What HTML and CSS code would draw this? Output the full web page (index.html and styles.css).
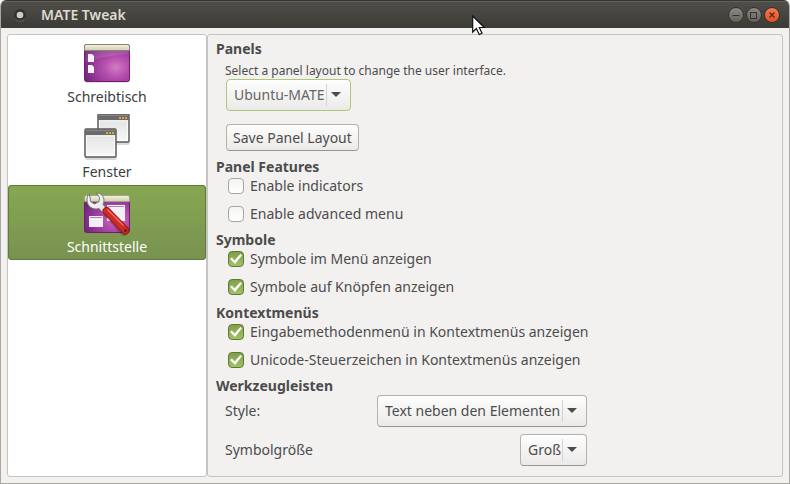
FILE: index.html
```html
<!DOCTYPE html>
<html lang="de">
<head>
<meta charset="utf-8">
<title>MATE Tweak</title>
<link rel="stylesheet" href="styles.css">
</head>
<body>
<div class="window">
  <header class="titlebar">
    <svg class="app-dot" width="14" height="14" viewBox="0 0 14 14"><circle cx="7" cy="7" r="6" fill="#343330"/><path d="M2 10.500a6 6 0 0 0 10 0" fill="none" stroke="#66645e"/><circle cx="7" cy="7" r="3.300" fill="#cfccc5"/></svg>
    <h1 class="title">MATE Tweak</h1>
    <div class="window-buttons">
      <button class="window-button" type="button" aria-label="Minimieren"><svg width="14" height="14" viewBox="0 0 14 14"><path d="M3.500 7.500h7" stroke="#33322f"/></svg></button>
      <button class="window-button" type="button" aria-label="Maximieren"><svg width="14" height="14" viewBox="0 0 14 14"><rect x="3.500" y="4.500" width="6" height="6" fill="none" stroke="#33322f"/></svg></button>
      <button class="window-button close" type="button" aria-label="Schließen"><svg width="14" height="14" viewBox="0 0 14 14"><path d="M4.500 4.500l5 5m0-5l-5 5" stroke="#5b2412" stroke-width="1.300"/></svg></button>
    </div>
  </header>
  <main class="content">
    <nav class="sidebar">
      <a class="item" href="#desktop">
        <svg width="48" height="48" viewBox="0 0 48 48">
          <defs>
            <radialGradient id="purple" cx=".7" cy=".62" r=".75"><stop offset="0" stop-color="#d27cc0"/><stop offset=".35" stop-color="#b750ae"/><stop offset=".75" stop-color="#8e3494"/><stop offset="1" stop-color="#6b2a78"/></radialGradient>
            <linearGradient id="bar" x2="0" y2="1"><stop offset="0" stop-color="#f4f2df"/><stop offset="1" stop-color="#d0ceb2"/></linearGradient>
          </defs>
          <rect x="2" y="40" width="44" height="4" rx="2" fill="#000" opacity=".12"/>
          <rect x="1.500" y="5.500" width="45" height="37" rx="2" fill="url(#purple)" stroke="#7b1675"/>
          <path d="M2.500 12h43v3Q20 17 2.500 23z" fill="#fff" opacity=".1"/>
          <path d="M1.500 11.500V7.500a2 2 0 0 1 2-2h41a2 2 0 0 1 2 2v4z" fill="url(#bar)" stroke="#898770"/>
          <path d="M5 15h4l2 2v6H5zM5 26h4l2 2v6H5z" fill="#f7f2f7"/>
        </svg>
        <span>Schreibtisch</span>
      </a>
      <a class="item" href="#windows">
        <svg width="48" height="48" viewBox="0 0 48 48">
          <defs><linearGradient id="pane" x2="0" y2="1"><stop offset="0" stop-color="#dedede"/><stop offset="1" stop-color="#f8f8f8"/></linearGradient></defs>
          <g id="mini-window">
            <rect x="15" y="27" width="32" height="4" rx="2" fill="#000" opacity=".15"/>
            <rect x="15" y="0" width="31" height="28" rx="1" fill="url(#pane)" stroke="#5b5b5b" stroke-width="1.500"/>
            <rect x="16.500" y="7" width="28" height="19.500" fill="none" stroke="#fff" opacity=".7"/>
            <path d="M15 0h31v6H15z" fill="#6b6b6b"/><path d="M16 1.500h29" stroke="#858585"/>
            <path d="M36 3h2v2h-2zM39 3h2v2h-2zM42 3h2v2h-2z" fill="#dca73d"/>
          </g>
          <use href="#mini-window" x="-13" y="15"/>
        </svg>
        <span>Fenster</span>
      </a>
      <a class="item selected" href="#interface" aria-current="page">
        <svg width="48" height="48" viewBox="0 0 48 48">
          <defs><linearGradient id="metal" x2="1" y2="1"><stop offset="0" stop-color="#fff"/><stop offset="1" stop-color="#dededa"/></linearGradient></defs>
          <rect x="1.500" y="7.500" width="45" height="36" rx="2" fill="url(#purple)" stroke="#7b1675"/>
          <path d="M1.500 12.500V8.500a2 2 0 0 1 2-2h41a2 2 0 0 1 2 2v4z" fill="url(#bar)" stroke="#a5a383"/>
          <path d="M24 16h18v16H24zM6 27h14v11H6z" fill="#f6eef6"/><path d="M25 17.500h16M7 28.500h12" stroke="#9b8b9d"/>
          <path d="M24 24L41 43" stroke="#000" stroke-width="8" stroke-linecap="round" opacity=".2"/>
          <path d="M13.500 4C18 4 21 7.500 21 11.500C21 13 20.500 14.500 20 15.500L25 20.500L20.500 24.500L16 19.500C10 21.500 4 17.500 4 11C4 8 5 6 6.500 5L7.500 12.500L11.500 15L16 12.500L16.500 8.500z" fill="url(#metal)" stroke="#777770" stroke-linejoin="round"/>
          <path d="M23.500 22L42.500 41.500" stroke="#971711" stroke-width="8" stroke-linecap="round"/>
          <path d="M23.500 22L42.500 41.500" stroke="#d02c25" stroke-width="6" stroke-linecap="round"/>
          <path d="M25 21L40 36" stroke="#ee6e63" stroke-width="1.500" stroke-linecap="round"/>
          <circle cx="42.500" cy="41.500" r="1.500" fill="#641b1b"/>
        </svg>
        <span>Schnittstelle</span>
      </a>
    </nav>
    <form class="panel">
      <section class="panels">
        <h2>Panels</h2>
        <p class="hint"><label for="layout">Select a panel layout to change the user interface.</label></p>
        <div class="combo focused"><select id="layout"><option>Ubuntu-MATE</option></select></div>
        <button class="save" type="button">Save Panel Layout</button>
      </section>
      <section>
        <h2>Panel Features</h2>
        <label class="check"><input type="checkbox">Enable indicators</label>
        <label class="check"><input type="checkbox">Enable advanced menu</label>
      </section>
      <section>
        <h2>Symbole</h2>
        <label class="check"><input type="checkbox" checked>Symbole im Menü anzeigen</label>
        <label class="check"><input type="checkbox" checked>Symbole auf Knöpfen anzeigen</label>
      </section>
      <section>
        <h2>Kontextmenüs</h2>
        <label class="check"><input type="checkbox" checked>Eingabemethodenmenü in Kontextmenüs anzeigen</label>
        <label class="check"><input type="checkbox" checked>Unicode-Steuerzeichen in Kontextmenüs anzeigen</label>
      </section>
      <section>
        <h2>Werkzeugleisten</h2>
        <div class="field"><label for="style">Style:</label><div class="combo"><select id="style"><option>Text neben den Elementen</option></select></div></div>
        <div class="field"><label for="size">Symbolgröße</label><div class="combo"><select id="size"><option>Groß</option></select></div></div>
      </section>
    </form>
  </main>
</div>
<svg class="pointer" width="14" height="21" viewBox="0 0 14 21"><path d="M.700 1v16l3.700-3.500 2.800 6 2.800-1.300-2.700-5.700h5z" fill="#fff" stroke="#111" stroke-width="1.200"/></svg>
</body>
</html>
```
FILE: styles.css
```css
* {
  box-sizing: border-box;
}

body {
  margin: 0;
  background: #fff;
  color: #4c4c4c;
  font: 14px/18px "Noto Sans", "Open Sans", sans-serif;
}

.window {
  display: flex;
  flex-direction: column;
  min-height: 100vh;
  border: 1px solid #aaa8a2;
  border-top: 0;
  border-radius: 6px 6px 0 0;
  background: #f2f1f0;
  overflow: hidden;
}

.titlebar {
  display: flex;
  align-items: center;
  height: 28px;
  padding: 0 9px 0 12px;
  border-top: 1px solid #35342f;
  background: linear-gradient(#504f49, #3c3b37);
  box-shadow: inset 0 1px #62615b;
}

.title {
  flex: 1;
  margin: 0 0 0 14px;
  color: #dfdbd2;
  font-size: 14px;
  line-height: 16px;
  font-weight: 600;
}

.window-buttons {
  display: flex;
  gap: 2px;
}

.window-button {
  width: 16px;
  height: 16px;
  padding: 0;
  border: 1px solid #33322e;
  border-radius: 50%;
  background: linear-gradient(#8b8982, #64625c);
}

.window-button svg {
  display: block;
}

.window-button.close {
  background: linear-gradient(#f67b53, #e4501f);
}

.content {
  flex: 1;
  display: grid;
  grid-template-columns: 200px 1fr;
  padding: 6px;
}

.sidebar,
.panel {
  border: 1px solid #c6c3c0;
  border-radius: 3px;
}

.sidebar {
  background: #fff;
}

.item {
  display: flex;
  flex-direction: column;
  align-items: center;
  height: 75px;
  padding-top: 4px;
  color: #3c3c3c;
  text-decoration: none;
}

.item span {
  margin-top: 1px;
}

.item.selected {
  border-radius: 4px;
  background: linear-gradient(#87a752, #789250);
  box-shadow: inset 0 0 0 1px #5f7d36;
  color: #fff;
}

.panel {
  display: flex;
  flex-direction: column;
  gap: 7px;
  padding: 5px 8px 0;
}

h2 {
  margin: 0;
  font-size: 14px;
  line-height: 18px;
}

.hint {
  margin: 4px 0 0 9px;
  font-size: 12px;
  line-height: 17px;
}

.combo {
  position: relative;
  width: fit-content;
}

.panels .combo {
  margin-left: 10px;
}

select,
.save {
  display: block;
  border: 1px solid #b4b1ac;
  border-bottom-color: #989590;
  border-radius: 4px;
  background: linear-gradient(#fdfdfd, #eceae8);
  color: #4c4c4c;
  font: inherit;
}

select {
  appearance: none;
  height: 32px;
  padding: 0 25px 0 7px;
}

.focused select {
  border-color: #adc77b;
  color: #666;
}

.combo::before,
.combo::after {
  content: "";
  position: absolute;
  pointer-events: none;
}

.combo::before {
  top: 5px;
  right: 24px;
  bottom: 5px;
  width: 1px;
  background: #d5d2cf;
}

.combo::after {
  top: 13px;
  right: 10px;
  border: 5px solid transparent;
  border-top-color: #4c4c4c;
  border-bottom: 0;
}

.save {
  height: 27px;
  margin: 13px 0 0 10px;
  padding: 0 6px;
}

.check {
  display: flex;
  align-items: center;
  gap: 6px;
  width: fit-content;
  height: 20px;
  margin-left: 12px;
}

.check + .check {
  margin-top: 8px;
}

.check input {
  appearance: none;
  display: grid;
  place-items: center;
  width: 16px;
  height: 16px;
  margin: 0;
  border: 1px solid #aaa7a3;
  border-radius: 4px;
  background: linear-gradient(#f4f4f4, #fff);
}

.check input:checked {
  border-color: #5e7a34;
  background: linear-gradient(#809f49, #a3c164);
}

.check input:checked::before {
  content: "";
  width: 12px;
  height: 10px;
  background: #fff;
  clip-path: polygon(0 50%, 16% 36%, 38% 64%, 86% 0, 100% 12%, 42% 100%);
}

.field {
  display: flex;
  align-items: center;
  justify-content: space-between;
  max-width: 362px;
  margin-left: 9px;
}

.field + .field {
  margin-top: 7px;
}

.pointer {
  position: absolute;
  top: 15px;
  left: 472px;
}
```
